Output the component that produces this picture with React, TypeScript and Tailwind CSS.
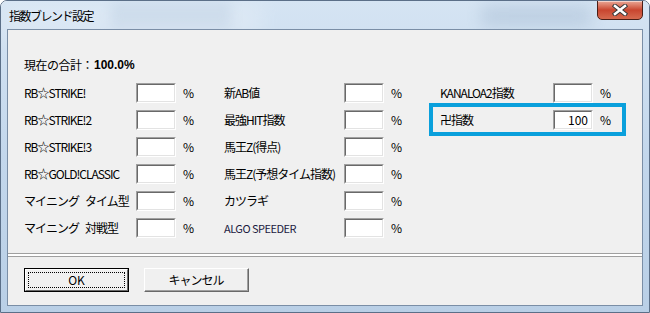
import React from "react";

const FONT = '"Noto Sans CJK JP", "Noto Sans", sans-serif';

function Field({ value }: { value?: string }) {
  return (
    <div className="w-[40px] h-[20px] shrink-0 border-t border-l border-t-[#a0a0a0] border-l-[#a0a0a0] border-b border-r border-b-white border-r-white">
      <div className="w-full h-full bg-white border-t border-l border-t-[#696969] border-l-[#696969] border-b border-r border-b-[#e3e3e3] border-r-[#e3e3e3] flex items-center justify-end pr-[3px] text-[12px] text-black leading-none">
        {value}
      </div>
    </div>
  );
}

function Row({
  label,
  labelW,
  value,
  small,
  highlight,
}: {
  label: React.ReactNode;
  labelW: string;
  value?: string;
  small?: boolean;
  highlight?: boolean;
}) {
  return (
    <div className="relative h-[27px] flex items-start">
      <div
        className={`${labelW} shrink-0 h-[20px] flex items-center whitespace-nowrap overflow-visible ${
          small ? "text-[11px] tracking-[-0.5px] text-[#1a1a40]" : "text-[12px] tracking-[-1px] text-black"
        }`}
      >
        {label}
      </div>
      <Field value={value} />
      <div className="ml-[7px] h-[20px] flex items-center text-[12px] text-black">%</div>
      {highlight && (
        <div className="absolute left-[-11px] top-[-7px] w-[197px] h-[33px] border-[4px] border-[#0aa0dc] pointer-events-none" />
      )}
    </div>
  );
}

export default function App() {
  const left: { k: string; l: React.ReactNode }[] = [
    { k: "a", l: "RB☆STRIKE!" },
    { k: "b", l: "RB☆STRIKE!2" },
    { k: "c", l: "RB☆STRIKE!3" },
    { k: "d", l: "RB☆GOLD!CLASSIC" },
    { k: "e", l: (<><span>マイニング</span><span className="inline-block w-[6px]" /><span>タイム型</span></>) },
    { k: "f", l: (<><span>マイニング</span><span className="inline-block w-[6px]" /><span>対戦型</span></>) },
  ];
  const mid = ["新AB値", "最強HIT指数", "馬王Z(得点)", "馬王Z(予想タイム指数)", "カツラギ", "ALGO SPEEDER"];
  return (
    <div
      className="w-[650px] h-[313px] overflow-hidden relative flex flex-col rounded-t-[7px] border border-[#5b6f88]"
      style={{ fontFamily: FONT }}
    >
      <div className="absolute inset-0 bg-gradient-to-b from-[#d5e4f3] via-[#c3d7ec] to-[#b9cfe6]" />
      <div className="absolute left-[110px] top-[2px] w-[120px] h-[26px] bg-[#9fb7d0] opacity-30 blur-[6px]" />
      <div className="absolute left-[480px] top-[4px] w-[110px] h-[22px] bg-[#8ea6c0] opacity-30 blur-[8px]" />
      <div className="absolute left-[0px] top-[0px] w-[260px] h-[40px] bg-white opacity-20 blur-[10px]" />

      {/* title bar */}
      <div className="relative h-[28px] flex items-start justify-between">
        <div className="pl-[8px] pt-[7px] text-[12px] tracking-[-1.5px] text-black leading-[16px]">指数ブレンド設定</div>
        <div className="mr-[6px] mt-[-1px] w-[46px] h-[20px] rounded-b-[5px] border border-[#4a1e16] bg-gradient-to-b from-[#e9a796] via-[#c9452f] to-[#d66a4f] flex items-center justify-center shadow-[inset_0_1px_0_rgba(255,255,255,0.5)]">
          <svg width="16" height="12" viewBox="0 0 16 12">
            <path d="M3 2 L13 10 M13 2 L3 10" stroke="#3a3a3a" strokeWidth="4.5" strokeLinecap="square" />
            <path d="M3 2 L13 10 M13 2 L3 10" stroke="#ffffff" strokeWidth="2.5" strokeLinecap="square" />
          </svg>
        </div>
      </div>

      {/* client area */}
      <div className="relative mx-[6px] h-[277px] border border-[#7a8ea6] bg-[#f0f0f0] flex flex-col">
        <div className="pl-[16px] pt-[27px] h-[43px] flex items-center text-[12px] text-black leading-[16px]">
          <span className="tracking-[-0.5px]">現在の合計：</span>
          <span className="font-bold ml-[1px]" style={{ fontFamily: '"Liberation Sans", Arial, sans-serif' }}>100.0%</span>
        </div>
        <div className="mt-[10px] pl-[16px] flex">
          <div className="w-[200px] flex flex-col">
            {left.map((r) => (
              <Row key={r.k} label={r.l} labelW="w-[112px]" />
            ))}
          </div>
          <div className="w-[216px] flex flex-col">
            {mid.map((l) => (
              <Row key={l} label={l} labelW="w-[120px]" small={l === "ALGO SPEEDER"} />
            ))}
          </div>
          <div className="flex flex-col">
            <Row label="KANALOA2指数" labelW="w-[113px]" />
            <Row label="卍指数" labelW="w-[113px]" value="100" highlight />
          </div>
        </div>
        <div className="mt-[8px] h-[4px] border-t border-b border-[#a0a0a0] bg-white" />
        <div className="mt-[11px] pl-[16px] flex gap-[15px]">
          <button className="w-[105px] h-[24px] border border-black bg-[#f0f0f0] p-0">
            <div className="w-full h-full border-t border-l border-t-white border-l-white border-b border-r border-b-[#696969] border-r-[#696969] p-[2px]">
              <div className="w-full h-full border border-dotted border-black flex items-center justify-center text-[12px] text-black">
                OK
              </div>
            </div>
          </button>
          <button className="w-[105px] h-[24px] border-t border-l border-t-white border-l-white border-b border-r border-b-[#696969] border-r-[#696969] bg-[#f0f0f0] p-0">
            <div className="w-full h-full border-b border-r border-b-[#a0a0a0] border-r-[#a0a0a0] flex items-center justify-center text-[12px] tracking-[-1px] text-black">
              キャンセル
            </div>
          </button>
        </div>
      </div>
    </div>
  );
}
